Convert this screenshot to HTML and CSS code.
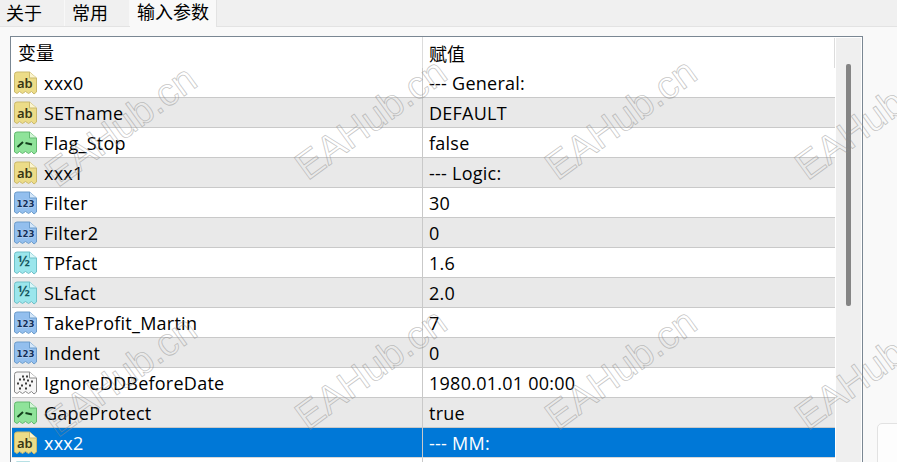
FILE: index.html
```html
<!DOCTYPE html>
<html lang="zh">
<head>
<meta charset="utf-8">
<title>输入参数</title>
<link rel="stylesheet" href="styles.css">
</head>
<body>
<svg class="defs" width="0" height="0" aria-hidden="true">
  <defs>
    <path id="sheet" d="M1.5 4 Q1.5 1.5 4 1.5 H16.5 L23.5 7.5 V21.5 L21 23.5 L18.5 21 L15.5 23 L12.5 21 L9.5 23 L6.5 21 L4 23 L1.5 21.5 Z"/>
    <path id="fold" d="M16.5 1.5 V7.5 H23.5"/>
    <symbol id="i-ab" viewBox="0 0 25 25">
      <use href="#sheet" fill="#ecdc88" stroke="#cbb96c"/><use href="#fold" fill="#fbf5cf" stroke="#cbb96c"/>
      <text x="4" y="17" class="ico-t ab">ab</text>
    </symbol>
    <symbol id="i-bool" viewBox="0 0 25 25">
      <use href="#sheet" fill="#8fe39a" stroke="#62b96f"/><use href="#fold" fill="#d4f6d8" stroke="#62b96f"/>
      <path d="M4.5 16.5 L10 11.5 M12.5 12.5 L19 14" stroke="#14401c" stroke-width="2" fill="none"/>
    </symbol>
    <symbol id="i-int" viewBox="0 0 25 25">
      <use href="#sheet" fill="#93bfee" stroke="#6d9dcc"/><use href="#fold" fill="#d6e8fa" stroke="#6d9dcc"/>
      <text x="3.5" y="16.5" class="ico-t num" textLength="18" lengthAdjust="spacingAndGlyphs">123</text>
    </symbol>
    <symbol id="i-frac" viewBox="0 0 25 25">
      <use href="#sheet" fill="#9be6ec" stroke="#6fc0c8"/><use href="#fold" fill="#d9f7f9" stroke="#6fc0c8"/>
      <text x="4.5" y="15" class="ico-t frac">½</text>
    </symbol>
    <symbol id="i-date" viewBox="0 0 25 25">
      <use href="#sheet" fill="#f6f6f6" stroke="#8a8a8a"/><use href="#fold" fill="#fff" stroke="#8a8a8a"/>
      <path d="M9 5h2v2H9zM13 5h2v2h-2zM6 8h2v2H6zM10 8h2v2h-2zM14 9h2v2h-2zM18 10h2v2h-2zM4 12h2v2H4zM12 12h2v2h-2zM8 14h2v2H8zM16 14h2v2h-2zM12 17h2v2h-2zM6 17h2v2H6z" fill="#3c3c3c"/>
    </symbol>
  </defs>
</svg>

<nav class="tabs">
  <span class="tab">关于</span>
  <span class="tab">常用</span>
  <span class="tab active">输入参数</span>
</nav>

<main class="panel">
  <section class="box">
    <div class="list">
      <div class="head"><span class="c1">变量</span><span class="c2">赋值</span></div>
      <div class="row"><span class="c1"><svg class="ico"><use href="#i-ab"/></svg>xxx0</span><span class="c2">--- General:</span></div>
      <div class="row alt"><span class="c1"><svg class="ico"><use href="#i-ab"/></svg>SETname</span><span class="c2">DEFAULT</span></div>
      <div class="row"><span class="c1"><svg class="ico"><use href="#i-bool"/></svg>Flag_Stop</span><span class="c2">false</span></div>
      <div class="row alt"><span class="c1"><svg class="ico"><use href="#i-ab"/></svg>xxx1</span><span class="c2">--- Logic:</span></div>
      <div class="row"><span class="c1"><svg class="ico"><use href="#i-int"/></svg>Filter</span><span class="c2">30</span></div>
      <div class="row alt"><span class="c1"><svg class="ico"><use href="#i-int"/></svg>Filter2</span><span class="c2">0</span></div>
      <div class="row"><span class="c1"><svg class="ico"><use href="#i-frac"/></svg>TPfact</span><span class="c2">1.6</span></div>
      <div class="row alt"><span class="c1"><svg class="ico"><use href="#i-frac"/></svg>SLfact</span><span class="c2">2.0</span></div>
      <div class="row"><span class="c1"><svg class="ico"><use href="#i-int"/></svg>TakeProfit_Martin</span><span class="c2">7</span></div>
      <div class="row alt"><span class="c1"><svg class="ico"><use href="#i-int"/></svg>Indent</span><span class="c2">0</span></div>
      <div class="row"><span class="c1"><svg class="ico"><use href="#i-date"/></svg>IgnoreDDBeforeDate</span><span class="c2">1980.01.01 00:00</span></div>
      <div class="row alt"><span class="c1"><svg class="ico"><use href="#i-bool"/></svg>GapeProtect</span><span class="c2">true</span></div>
      <div class="row selected"><span class="c1"><svg class="ico"><use href="#i-ab"/></svg>xxx2</span><span class="c2">--- MM:</span></div>
      <div class="row"><span class="c1"><svg class="ico"><use href="#i-frac"/></svg></span><span class="c2"></span></div>
    </div>
    <div class="scrollbar"><div class="thumb"></div></div>
  </section>
  <aside class="corner-box"></aside>
</main>

<div class="marks" aria-hidden="true">
  <span class="mark m1">EAHub.cn</span>
  <span class="mark m2">EAHub.cn</span>
  <span class="mark m3">EAHub.cn</span>
  <span class="mark m4">EAHub.cn</span>
  <span class="mark m5">EAHub.cn</span>
  <span class="mark m6">EAHub.cn</span>
  <span class="mark m7">EAHub.cn</span>
  <span class="mark m8">EAHub.cn</span>
</div>
</body>
</html>
```

FILE: styles.css
```css
html, body {
  margin: 0;
  height: 462px;
  overflow: hidden;
  background: #f9f9f9;
  color: #000;
  font-family: "Open Sans", "Noto Sans CJK SC", sans-serif;
  font-size: 18px;
  letter-spacing: 0.25px;
}
.defs { position: absolute; }

.tabs {
  display: flex;
  height: 26px;
  background: #f0f0f0;
  border-bottom: 1px solid #e3e3e3;
}
.tab {
  width: 65px;
  box-sizing: border-box;
  padding-left: 6px;
  border-right: 1px solid #f8f8f8;
  font-family: "Noto Sans CJK SC", sans-serif;
  font-size: 18px;
  letter-spacing: 0;
  line-height: 25px;
}
.tab + .tab { padding-left: 7px; }
.tab.active {
  width: 87px;
  height: 27px;
  background: #f9f9f9;
  border-right: 1px solid #e3e3e3;
  line-height: 22px;
}

.panel { padding: 9px 0 0 10px; }
.box {
  display: flex;
  width: 851px;
  height: 430px;
  border: 1px solid #7a8793;
  border-bottom: 0;
  background: #fff;
  overflow: hidden;
}
.list { width: 823px; margin-left: 1px; flex: none; }
.head, .row { display: flex; }
.head {
  height: 31px;
  position: relative;
  font-family: "Noto Sans CJK SC", sans-serif;
  font-size: 18px;
  letter-spacing: 0;
  line-height: 33px;
}
.head::after {
  content: "";
  position: absolute;
  right: 0;
  top: 1px;
  bottom: 0;
  width: 1px;
  background: #dcdcdc;
}
.row {
  height: 29px;
  border-bottom: 1px solid #c9c9c9;
  background: #fff;
  line-height: 30px;
}
.row.alt { background: #e9e9e9; }
.row.selected { background: #0078d7; color: #fff; border-bottom-color: #d8d8d8; }
.c1 {
  width: 410px;
  flex: none;
  display: flex;
  align-items: center;
  border-right: 1px solid #c9c9c9;
  white-space: nowrap;
}
.head .c1 { padding-left: 6px; width: 404px; border-right-color: #dcdcdc; }
.c2 { padding-left: 6px; white-space: nowrap; }
.ico { width: 25px; height: 26px; margin: 0 6px 0 1px; flex: none; }
.ico-t { letter-spacing: 0; }
.ico-t.ab { font-family: "Noto Sans", sans-serif; font-size: 13px; font-weight: 600; fill: #3a3614; }
.ico-t.num { font-family: "DejaVu Sans", sans-serif; font-size: 9.5px; font-weight: 700; fill: #12305a; stroke: #e4effa; stroke-width: 0.4px; paint-order: stroke; }
.ico-t.frac { font-family: "Noto Sans", sans-serif; font-size: 15px; font-weight: 600; fill: #15565e; }

.scrollbar {
  width: 25px;
  margin: 1px 0 0 1px;
  background: #efefef;
  position: relative;
}
.thumb {
  position: absolute;
  left: 10px;
  top: 26px;
  width: 5px;
  height: 242px;
  border-radius: 2px;
  background: #858585;
}

.corner-box {
  position: absolute;
  left: 877px;
  top: 423px;
  width: 40px;
  height: 60px;
  box-sizing: border-box;
  border: 1px solid #e2e2e2;
  border-radius: 5px;
  background: #fdfdfd;
}

.marks { position: absolute; inset: 0; overflow: hidden; pointer-events: none; }
.mark {
  position: absolute;
  width: 200px;
  text-align: center;
  font-family: "Liberation Sans", sans-serif;
  font-size: 39px;
  letter-spacing: 0;
  line-height: 50px;
  color: transparent;
  -webkit-text-stroke: 0.8px rgba(140, 140, 140, 0.5);
  transform: rotate(-36deg);
  white-space: nowrap;
}
.m1 { left: 21px; top: 101px; }
.m2 { left: 271px; top: 94px; }
.m3 { left: 521px; top: 94px; }
.m4 { left: 771px; top: 94px; }
.m5 { left: 21px; top: 351px; }
.m6 { left: 271px; top: 344px; }
.m7 { left: 521px; top: 344px; }
.m8 { left: 771px; top: 344px; }
```
